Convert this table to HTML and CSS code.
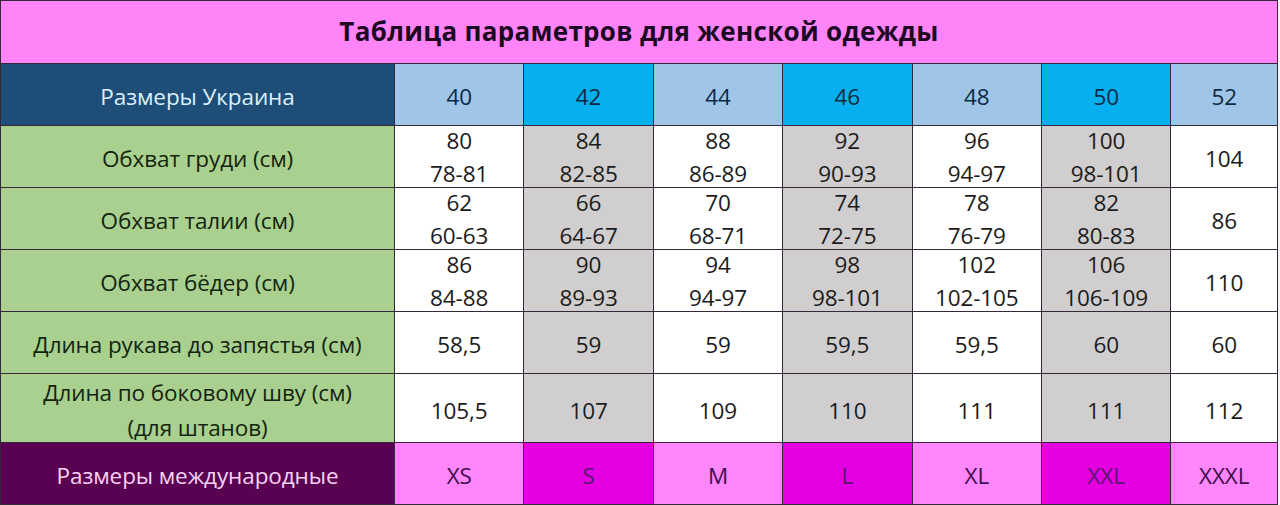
FILE: index.html
```html
<!DOCTYPE html>
<html lang="ru">
<head>
<meta charset="utf-8">
<title>Таблица параметров</title>
<link rel="stylesheet" href="styles.css">
</head>
<body>
<div class="table">
  <div class="title">Таблица параметров для женской одежды</div>

  <div class="c head-label">Размеры Украина</div>
  <div class="c hl">40</div>
  <div class="c hb">42</div>
  <div class="c hl">44</div>
  <div class="c hb">46</div>
  <div class="c hl">48</div>
  <div class="c hb">50</div>
  <div class="c hl">52</div>

  <div class="c label">Обхват груди (см)</div>
  <div class="c w two"><span>80</span><span>78-81</span></div>
  <div class="c g two"><span>84</span><span>82-85</span></div>
  <div class="c w two"><span>88</span><span>86-89</span></div>
  <div class="c g two"><span>92</span><span>90-93</span></div>
  <div class="c w two"><span>96</span><span>94-97</span></div>
  <div class="c g two"><span>100</span><span>98-101</span></div>
  <div class="c w">104</div>

  <div class="c label">Обхват талии (см)</div>
  <div class="c w two"><span>62</span><span>60-63</span></div>
  <div class="c g two"><span>66</span><span>64-67</span></div>
  <div class="c w two"><span>70</span><span>68-71</span></div>
  <div class="c g two"><span>74</span><span>72-75</span></div>
  <div class="c w two"><span>78</span><span>76-79</span></div>
  <div class="c g two"><span>82</span><span>80-83</span></div>
  <div class="c w">86</div>

  <div class="c label">Обхват бёдер (см)</div>
  <div class="c w two"><span>86</span><span>84-88</span></div>
  <div class="c g two"><span>90</span><span>89-93</span></div>
  <div class="c w two"><span>94</span><span>94-97</span></div>
  <div class="c g two"><span>98</span><span>98-101</span></div>
  <div class="c w two"><span>102</span><span>102-105</span></div>
  <div class="c g two"><span>106</span><span>106-109</span></div>
  <div class="c w">110</div>

  <div class="c label">Длина рукава до запястья (см)</div>
  <div class="c w">58,5</div>
  <div class="c g">59</div>
  <div class="c w">59</div>
  <div class="c g">59,5</div>
  <div class="c w">59,5</div>
  <div class="c g">60</div>
  <div class="c w">60</div>

  <div class="c label two tall"><span>Длина по боковому шву (см)</span><span>(для штанов)</span></div>
  <div class="c w">105,5</div>
  <div class="c g">107</div>
  <div class="c w">109</div>
  <div class="c g">110</div>
  <div class="c w">111</div>
  <div class="c g">111</div>
  <div class="c w">112</div>

  <div class="c intl-label">Размеры международные</div>
  <div class="c pl">XS</div>
  <div class="c pm">S</div>
  <div class="c pl">M</div>
  <div class="c pm">L</div>
  <div class="c pl">XL</div>
  <div class="c pm">XXL</div>
  <div class="c pl">XXXL</div>
</div>
</body>
</html>
```

FILE: styles.css
```css
html, body {
  margin: 0;
  padding: 0;
  background: #f4f4f4;
}

body {
  font-family: "Open Sans", "Noto Sans", sans-serif;
  width: 1280px;
  height: 505px;
  overflow: hidden;
}

.table {
  width: 1278px;
  height: 505px;
  box-sizing: border-box;
  display: grid;
  grid-template-columns: 393px repeat(6, 128.4px) 1fr;
  grid-template-rows: 62px 61px 61px 61px 61px 61px 68px 61px;
  gap: 1px;
  padding: 1px;
  background: #34283a;
}

.title {
  grid-column: 1 / -1;
  background: #ff84f8;
  color: #1c0a24;
  font-weight: 700;
  font-size: 26px;
  display: flex;
  align-items: center;
  justify-content: center;
  padding-bottom: 2px;
  box-sizing: border-box;
  letter-spacing: 0.3px;
}

.c {
  display: flex;
  align-items: center;
  justify-content: center;
  font-size: 22.5px;
  color: #1b1b1b;
  padding-top: 4px;
  box-sizing: border-box;
  letter-spacing: -0.1px;
  white-space: nowrap;
}

.two {
  flex-direction: column;
  padding-top: 1px;
  line-height: 33px;
}

.tall {
  line-height: 35px;
  padding-top: 3px;
}

.head-label {
  background: #1e4e77;
  color: #dcf0fb;
}

.hl {
  background: #9fc5e8;
  color: #0e2942;
}

.hb {
  background: #06b0ef;
  color: #0e2942;
}

.label {
  background: #a9d08e;
  color: #142410;
}

.w {
  background: #ffffff;
}

.g {
  background: #d0cece;
}

.intl-label {
  background: #5a0252;
  color: #f6d2f4;
}

.pl {
  background: #ff86fb;
  color: #3e0d50;
}

.pm {
  background: #e400e0;
  color: #5a1672;
}
```
